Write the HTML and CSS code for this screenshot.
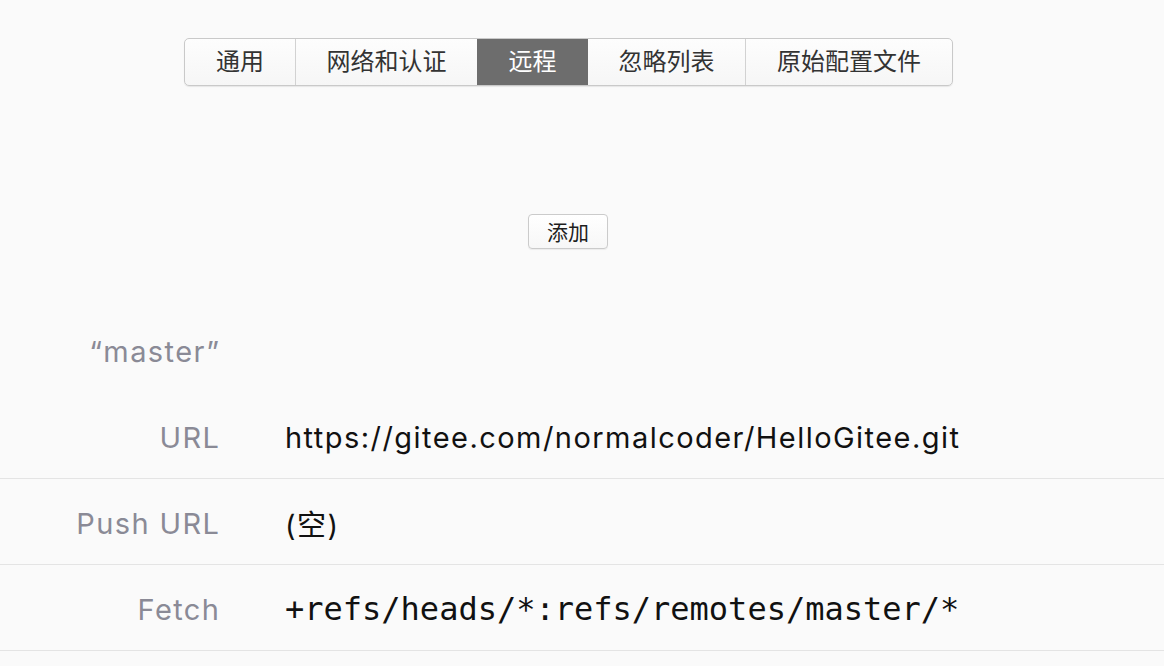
FILE: index.html
```html
<!DOCTYPE html>
<html lang="zh">
<head>
<meta charset="utf-8">
<link rel="stylesheet" href="styles.css">
</head>
<body>
<div class="page">
  <div class="tabs-wrap">
    <div class="tabs">
      <div class="tab t1">通用</div>
      <div class="tab t2">网络和认证</div>
      <div class="tab t3 active">远程</div>
      <div class="tab t4">忽略列表</div>
      <div class="tab t5">原始配置文件</div>
    </div>
  </div>
  <div class="add-wrap">
    <button class="add">添加</button>
  </div>
  <div class="remote">
    <div class="row head">
      <div class="label">“master”</div>
      <div class="value"></div>
    </div>
    <div class="row line">
      <div class="label">URL</div>
      <div class="value">https://gitee.com/normalcoder/HelloGitee.git</div>
    </div>
    <div class="row line">
      <div class="label">Push URL</div>
      <div class="value">(空)</div>
    </div>
    <div class="row line">
      <div class="label">Fetch</div>
      <div class="value mono">+refs/heads/*:refs/remotes/master/*</div>
    </div>
  </div>
</div>
</body>
</html>
```

FILE: styles.css
```css
html, body {
  margin: 0;
  padding: 0;
  background: #fafafa;
}
body {
  font-family: Inter, "Noto Sans CJK SC", sans-serif;
  width: 1164px;
  height: 666px;
  overflow: hidden;
}
.page {
  display: flex;
  flex-direction: column;
}
.tabs-wrap {
  display: flex;
  padding-top: 38px;
  padding-left: 184px;
}
.tabs {
  display: flex;
  height: 46px;
  border: 1px solid #c9c9c9;
  border-radius: 5px;
  background: linear-gradient(#fdfdfd, #f6f6f6);
  box-shadow: 0 1px 1px rgba(0,0,0,0.08);
  overflow: hidden;
}
.tab {
  display: flex;
  align-items: center;
  justify-content: center;
  flex-shrink: 0;
  padding-bottom: 5px;
  box-sizing: border-box;
  font-family: "Noto Sans CJK SC", sans-serif;
  font-size: 24px;
  color: #333333;
  border-left: 1px solid #d2d2d2;
}
.tab.t1 { border-left: none; width: 110px; }
.tab.t2 { width: 182px; }
.tab.t3 { width: 110px; }
.tab.t4 { width: 158px; }
.tab.t5 { width: 207px; }
.tab.active {
  background: #6d6d6d;
  color: #ffffff;
  border-left-color: #6d6d6d;
}
.tab.active + .tab { border-left-color: #6d6d6d; }
.add-wrap {
  display: flex;
  padding-top: 128px;
  padding-left: 528px;
}
.add {
  width: 80px;
  height: 35px;
  border: 1px solid #cbcbcb;
  border-radius: 4px;
  background: linear-gradient(#ffffff, #f7f7f7);
  box-shadow: 0 1px 1px rgba(0,0,0,0.06);
  font-family: "Noto Sans CJK SC", sans-serif;
  font-size: 21px;
  color: #1e1e1e;
  padding: 0 0 2px 0;
  display: flex;
  align-items: center;
  justify-content: center;
}
.remote {
  margin-top: 57px;
  display: flex;
  flex-direction: column;
}
.row {
  display: grid;
  grid-template-columns: 219px 1fr;
  column-gap: 66px;
  height: 86px;
  align-items: center;
  padding-top: 3px;
  box-sizing: border-box;
}
.row.head {
  height: 87px;
}
.row.line {
  border-bottom: 1px solid #e4e4e4;
}
.label {
  text-align: right;
  font-size: 29px;
  letter-spacing: 1.4px;
  margin-right: -1.4px;
  color: #8a8a96;
}
.value {
  font-size: 29px;
  letter-spacing: 1.45px;
  color: #111111;
  font-family: Inter, "Noto Sans CJK SC", sans-serif;
}
.value.mono {
  font-family: "DejaVu Sans Mono", monospace;
  font-size: 32px;
  letter-spacing: 0;
}
```
